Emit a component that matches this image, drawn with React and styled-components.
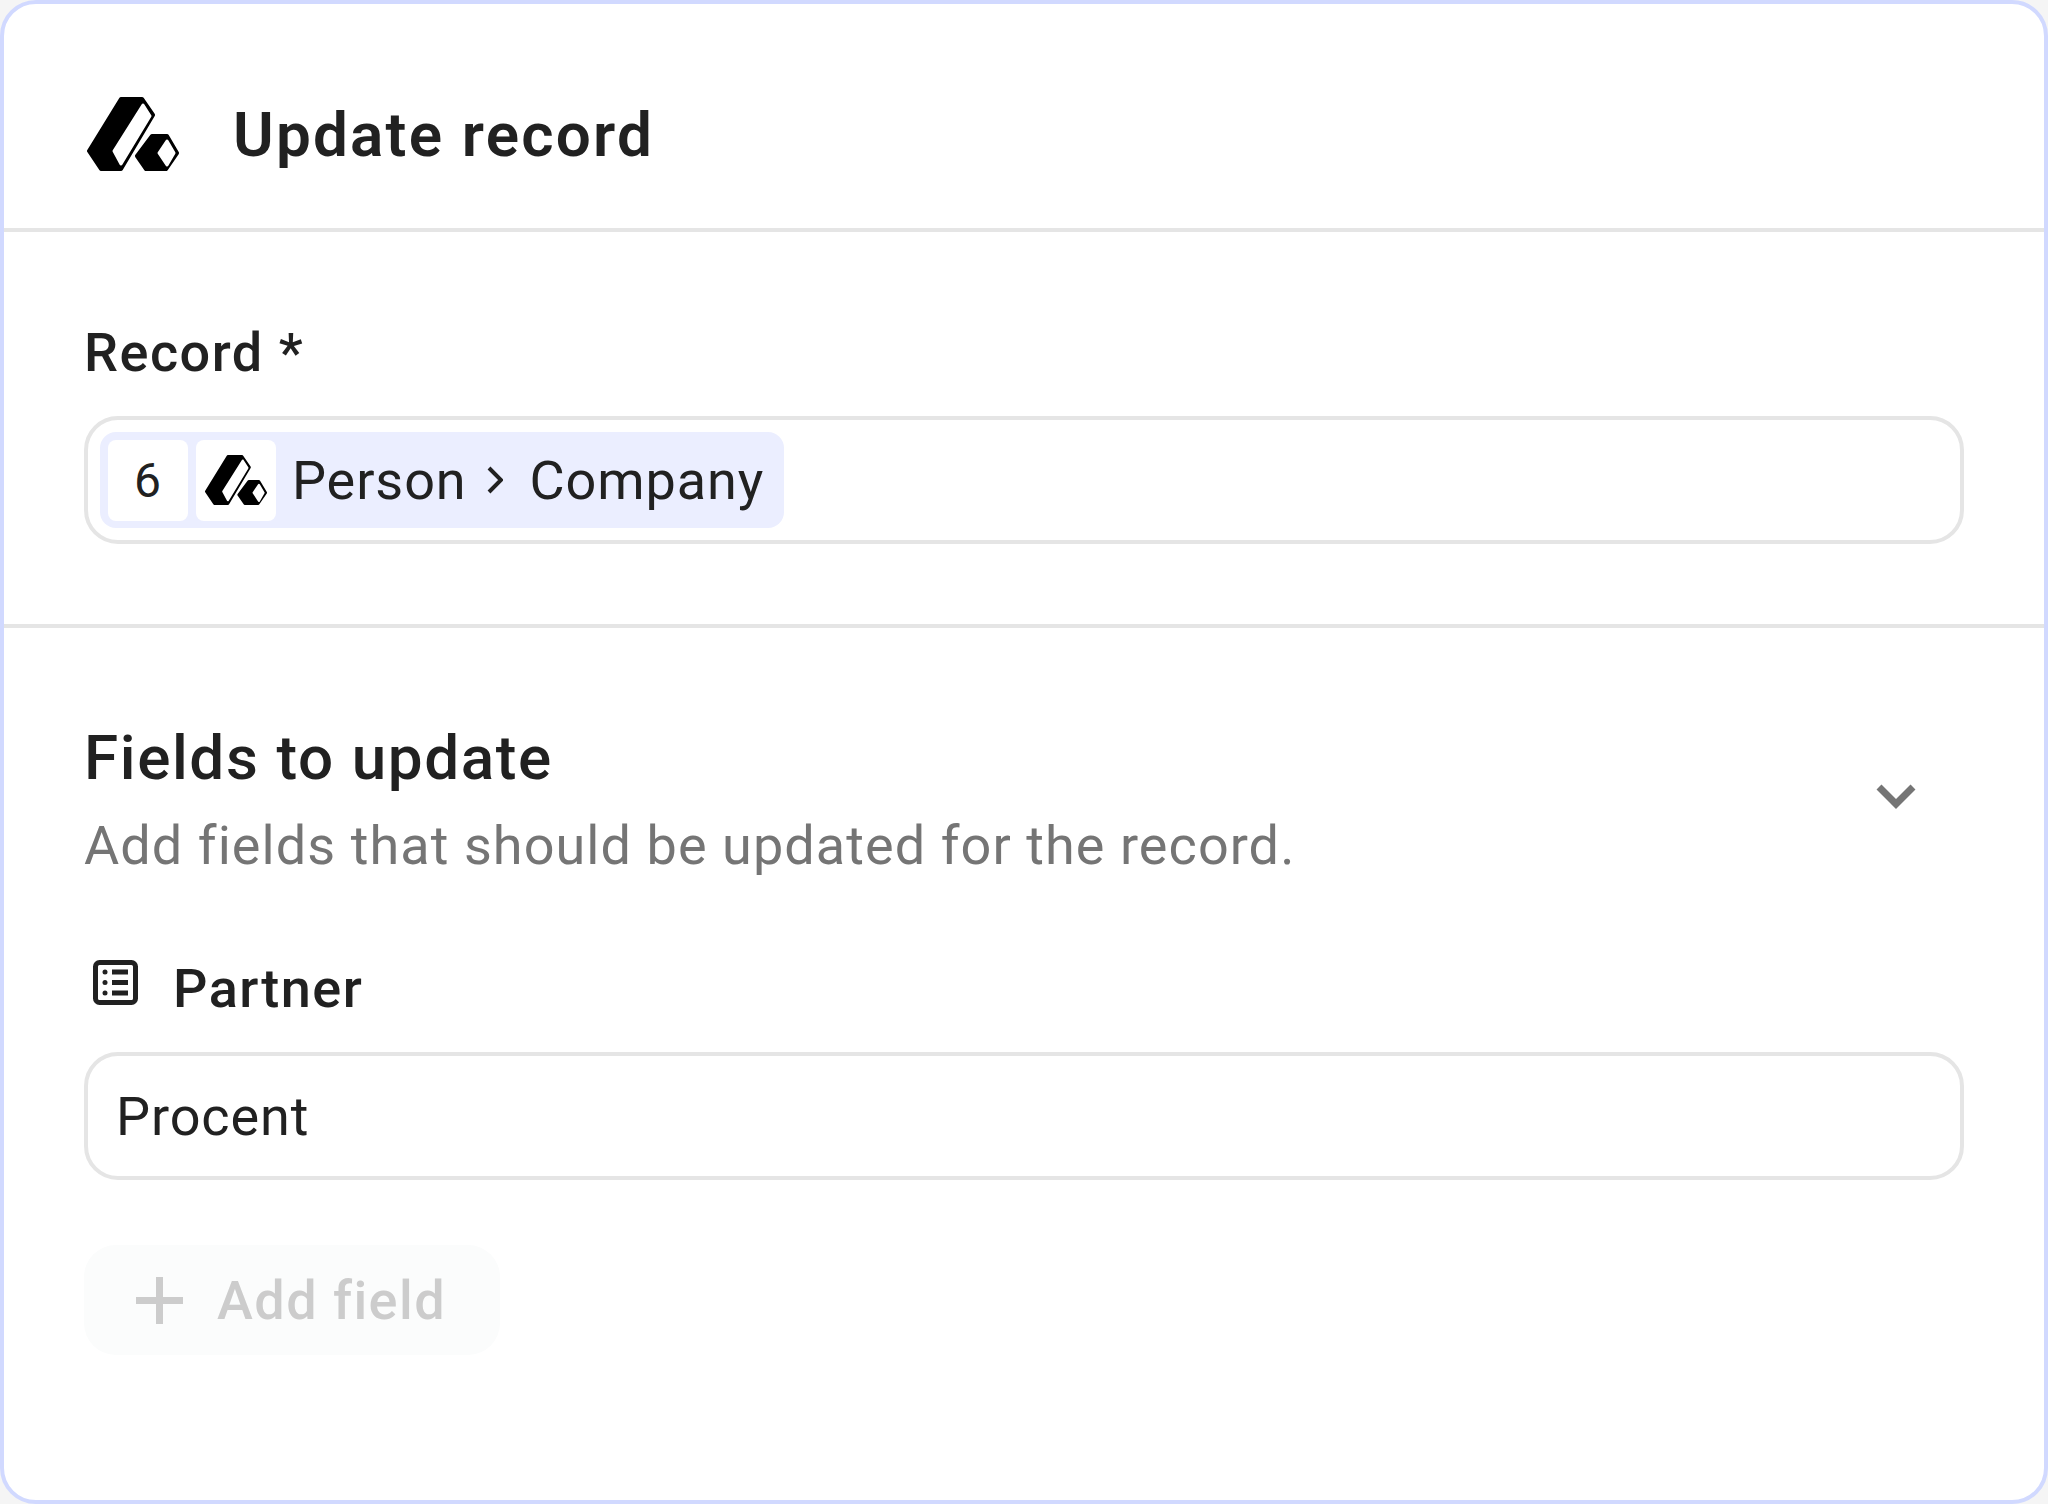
import React from "react";
import styled, { createGlobalStyle } from "styled-components";

const Global = createGlobalStyle`
  html, body { margin: 0; padding: 0; background: #f5f5f5; }
  * { box-sizing: border-box; }
  body { font-family: Roboto, "Liberation Sans", sans-serif; color: #212121; }
`;

const Card = styled.div`
  width: 2048px;
  height: 1504px;
  background: #fff;
  border: 4px solid #d1d9ff;
  border-radius: 36px;
  overflow: hidden;
`;
const Header = styled.header`
  height: 228px;
  display: flex;
  align-items: center;
  gap: 54px;
  padding: 38px 0 0 83px;
  border-bottom: 4px solid #e5e5e5;
`;
const Title = styled.h1`
  margin: 0;
  font-size: 62px;
  line-height: 80px;
  font-weight: 600;
  letter-spacing: 2.2px;
`;
const Section = styled.section`
  padding: ${(p) => p.$pad};
  border-bottom: ${(p) => (p.$divided ? "4px solid #e5e5e5" : "none")};
`;
const Label = styled.div`
  font-size: 54px;
  line-height: 72px;
  font-weight: 500;
  letter-spacing: 1.5px;
  display: flex;
  align-items: center;
  gap: 35px;
`;
const Field = styled.div`
  height: 128px;
  margin-top: ${(p) => p.$top}px;
  border: 4px solid #e5e5e5;
  border-radius: 34px;
  display: flex;
  align-items: center;
  padding: ${(p) => p.$pad};
  font-size: 54px;
  letter-spacing: 0.9px;
`;
const Pill = styled.div`
  height: 96px;
  background: #ebeeff;
  border-radius: 16px;
  display: flex;
  align-items: center;
  padding: 0 20px 0 8px;
`;
const Chip = styled.span`
  width: 80px;
  height: 81px;
  background: #fff;
  border-radius: 8px;
  margin-right: 8px;
  display: flex;
  align-items: center;
  justify-content: center;
  font-size: 48px;
`;
const Crumb = styled.span`
  font-size: 54px;
  margin-left: ${(p) => p.$left || 0}px;
`;
const FieldsHead = styled.div`
  display: flex;
  align-items: center;
  justify-content: space-between;
  padding-right: 48px;
`;
const Heading = styled.h2`
  margin: 0;
  font-size: 62px;
  line-height: 80px;
  font-weight: 500;
  letter-spacing: 1.6px;
`;
const Sub = styled.p`
  margin: 12px 0 0;
  font-size: 54px;
  line-height: 72px;
  letter-spacing: 1.07px;
  color: #757575;
`;
const FieldLabel = styled(Label)`
  margin-top: 71px;
  padding-left: 9px;
`;
const AddButton = styled.button`
  display: flex;
  align-items: center;
  gap: 34px;
  width: 416px;
  height: 110px;
  margin-top: 65px;
  padding: 0 0 0 52px;
  border: none;
  border-radius: 32px;
  background: #fbfcfc;
  color: #cccccc;
  font: 500 54px Roboto, "Liberation Sans", sans-serif;
  letter-spacing: 1.45px;
`;
const Chevron = styled.svg`
  margin-bottom: 6px;
`;
const Separator = styled.svg`
  margin: 0 27px 0 20px;
`;
const ListGlyph = styled.svg`
  flex: none;
  margin-bottom: 14px;
`;
const LogoGlyph = styled.svg`
  flex: none;
  margin-bottom: ${(p) => p.$lift || 0}px;
`;

const Logo = ({ w, h, lift }) => (
  <LogoGlyph width={w} height={h} viewBox="0 0 92 74" $lift={lift}>
    <path d="M34 2H55L66 18L34 72H14L2 54Z" fill="#000" stroke="#000" strokeWidth="4" strokeLinejoin="round" />
    <path d="M56 8L63 19L34 67L27 54Z" fill="#fff" stroke="#fff" strokeWidth="3" strokeLinejoin="round" />
    <path d="M65 39H80L90 56L79 72H59L50 59Z" fill="#000" stroke="#000" strokeWidth="4" strokeLinejoin="round" />
    <path d="M80 44L87 56L80 68L72 56Z" fill="#fff" stroke="#fff" strokeWidth="3" strokeLinejoin="round" />
  </LogoGlyph>
);

const ListIcon = () => (
  <ListGlyph width="45" height="45" viewBox="0 0 45 45">
    <rect x="2.5" y="2.5" width="40" height="40" rx="4" fill="none" stroke="#212121" strokeWidth="5" />
    <circle cx="12" cy="12" r="2.5" fill="#212121" />
    <circle cx="12" cy="22.5" r="2.5" fill="#212121" />
    <circle cx="12" cy="33" r="2.5" fill="#212121" />
    <path d="M19 12H35M19 22.5H35M19 33H35" stroke="#212121" strokeWidth="5" />
  </ListGlyph>
);

export default function App() {
  return (
    <>
      <Global />
      <Card>
        <Header>
          <Logo w={92} h={74} lift={3} />
          <Title>Update record</Title>
        </Header>
        <Section $pad="85px 80px 80px" $divided>
          <Label>Record *</Label>
          <Field $top={27} $pad="0 0 0 12px">
            <Pill>
              <Chip>6</Chip>
              <Chip>
                <Logo w={62} h={50} />
              </Chip>
              <Crumb $left={8}>Person</Crumb>
              <Separator width="16" height="28" viewBox="0 0 16 28">
                <path d="M2 2L14 14L2 26" fill="none" stroke="#212121" strokeWidth="4" />
              </Separator>
              <Crumb>Company</Crumb>
            </Pill>
          </Field>
        </Section>
        <Section $pad="90px 80px 0">
          <FieldsHead>
            <div>
              <Heading>Fields to update</Heading>
              <Sub>Add fields that should be updated for the record.</Sub>
            </div>
            <Chevron width="40" height="26" viewBox="0 0 40 26">
              <path d="M3 3L20 20L37 3" fill="none" stroke="#757575" strokeWidth="7" />
            </Chevron>
          </FieldsHead>
          <FieldLabel>
            <ListIcon />
            Partner
          </FieldLabel>
          <Field $top={27} $pad="0 0 0 28px">
            Procent
          </Field>
          <AddButton>
            <svg width="47" height="47" viewBox="0 0 47 47">
              <path d="M23.5 0V47M0 23.5H47" stroke="#cccccc" strokeWidth="7" />
            </svg>
            Add field
          </AddButton>
        </Section>
      </Card>
    </>
  );
}
